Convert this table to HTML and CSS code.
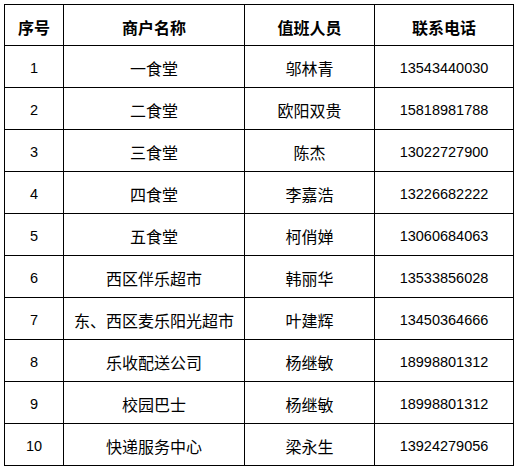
FILE: index.html
```html
<!DOCTYPE html>
<html lang="zh">
<head>
<meta charset="utf-8">
<link rel="stylesheet" href="styles.css">
</head>
<body>
<table class="roster">
  <colgroup>
    <col class="c-no"><col class="c-name"><col class="c-duty"><col class="c-tel">
  </colgroup>
  <thead>
    <tr><th>序号</th><th>商户名称</th><th>值班人员</th><th>联系电话</th></tr>
  </thead>
  <tbody>
    <tr><td class="num">1</td><td>一食堂</td><td>邬林青</td><td class="num">13543440030</td></tr>
    <tr><td class="num">2</td><td>二食堂</td><td>欧阳双贵</td><td class="num">15818981788</td></tr>
    <tr><td class="num">3</td><td>三食堂</td><td>陈杰</td><td class="num">13022727900</td></tr>
    <tr><td class="num">4</td><td>四食堂</td><td>李嘉浩</td><td class="num">13226682222</td></tr>
    <tr><td class="num">5</td><td>五食堂</td><td>柯俏婵</td><td class="num">13060684063</td></tr>
    <tr><td class="num">6</td><td>西区伴乐超市</td><td>韩丽华</td><td class="num">13533856028</td></tr>
    <tr><td class="num">7</td><td>东、西区麦乐阳光超市</td><td>叶建辉</td><td class="num">13450364666</td></tr>
    <tr><td class="num">8</td><td>乐收配送公司</td><td>杨继敏</td><td class="num">18998801312</td></tr>
    <tr><td class="num">9</td><td>校园巴士</td><td>杨继敏</td><td class="num">18998801312</td></tr>
    <tr><td class="num">10</td><td>快递服务中心</td><td>梁永生</td><td class="num">13924279056</td></tr>
  </tbody>
</table>
</body>
</html>
```
FILE: styles.css
```css
html, body {
  margin: 0;
  padding: 0;
  background: #fff;
}
body {
  padding: 4px 0 0 4px;
  font-family: "Noto Sans CJK SC", "Noto Sans", sans-serif;
  color: #000;
}
.roster {
  border-collapse: collapse;
  table-layout: fixed;
  width: 509px;
}
.c-no { width: 59px; }
.c-name { width: 181px; }
.c-duty { width: 130px; }
.c-tel { width: 139px; }
.roster th, .roster td {
  border: 1px solid #000;
  text-align: center;
  padding: 3px 0 0 0;
  white-space: nowrap;
  overflow: hidden;
}
.roster th {
  height: 37px;
  font-size: 16px;
  font-weight: 700;
  line-height: 20px;
}
.roster td {
  height: 38px;
  font-size: 16px;
  font-weight: 400;
  line-height: 20px;
}
.roster td.num {
  font-family: "Liberation Sans", "DejaVu Sans", sans-serif;
  font-size: 14.5px;
}
```
